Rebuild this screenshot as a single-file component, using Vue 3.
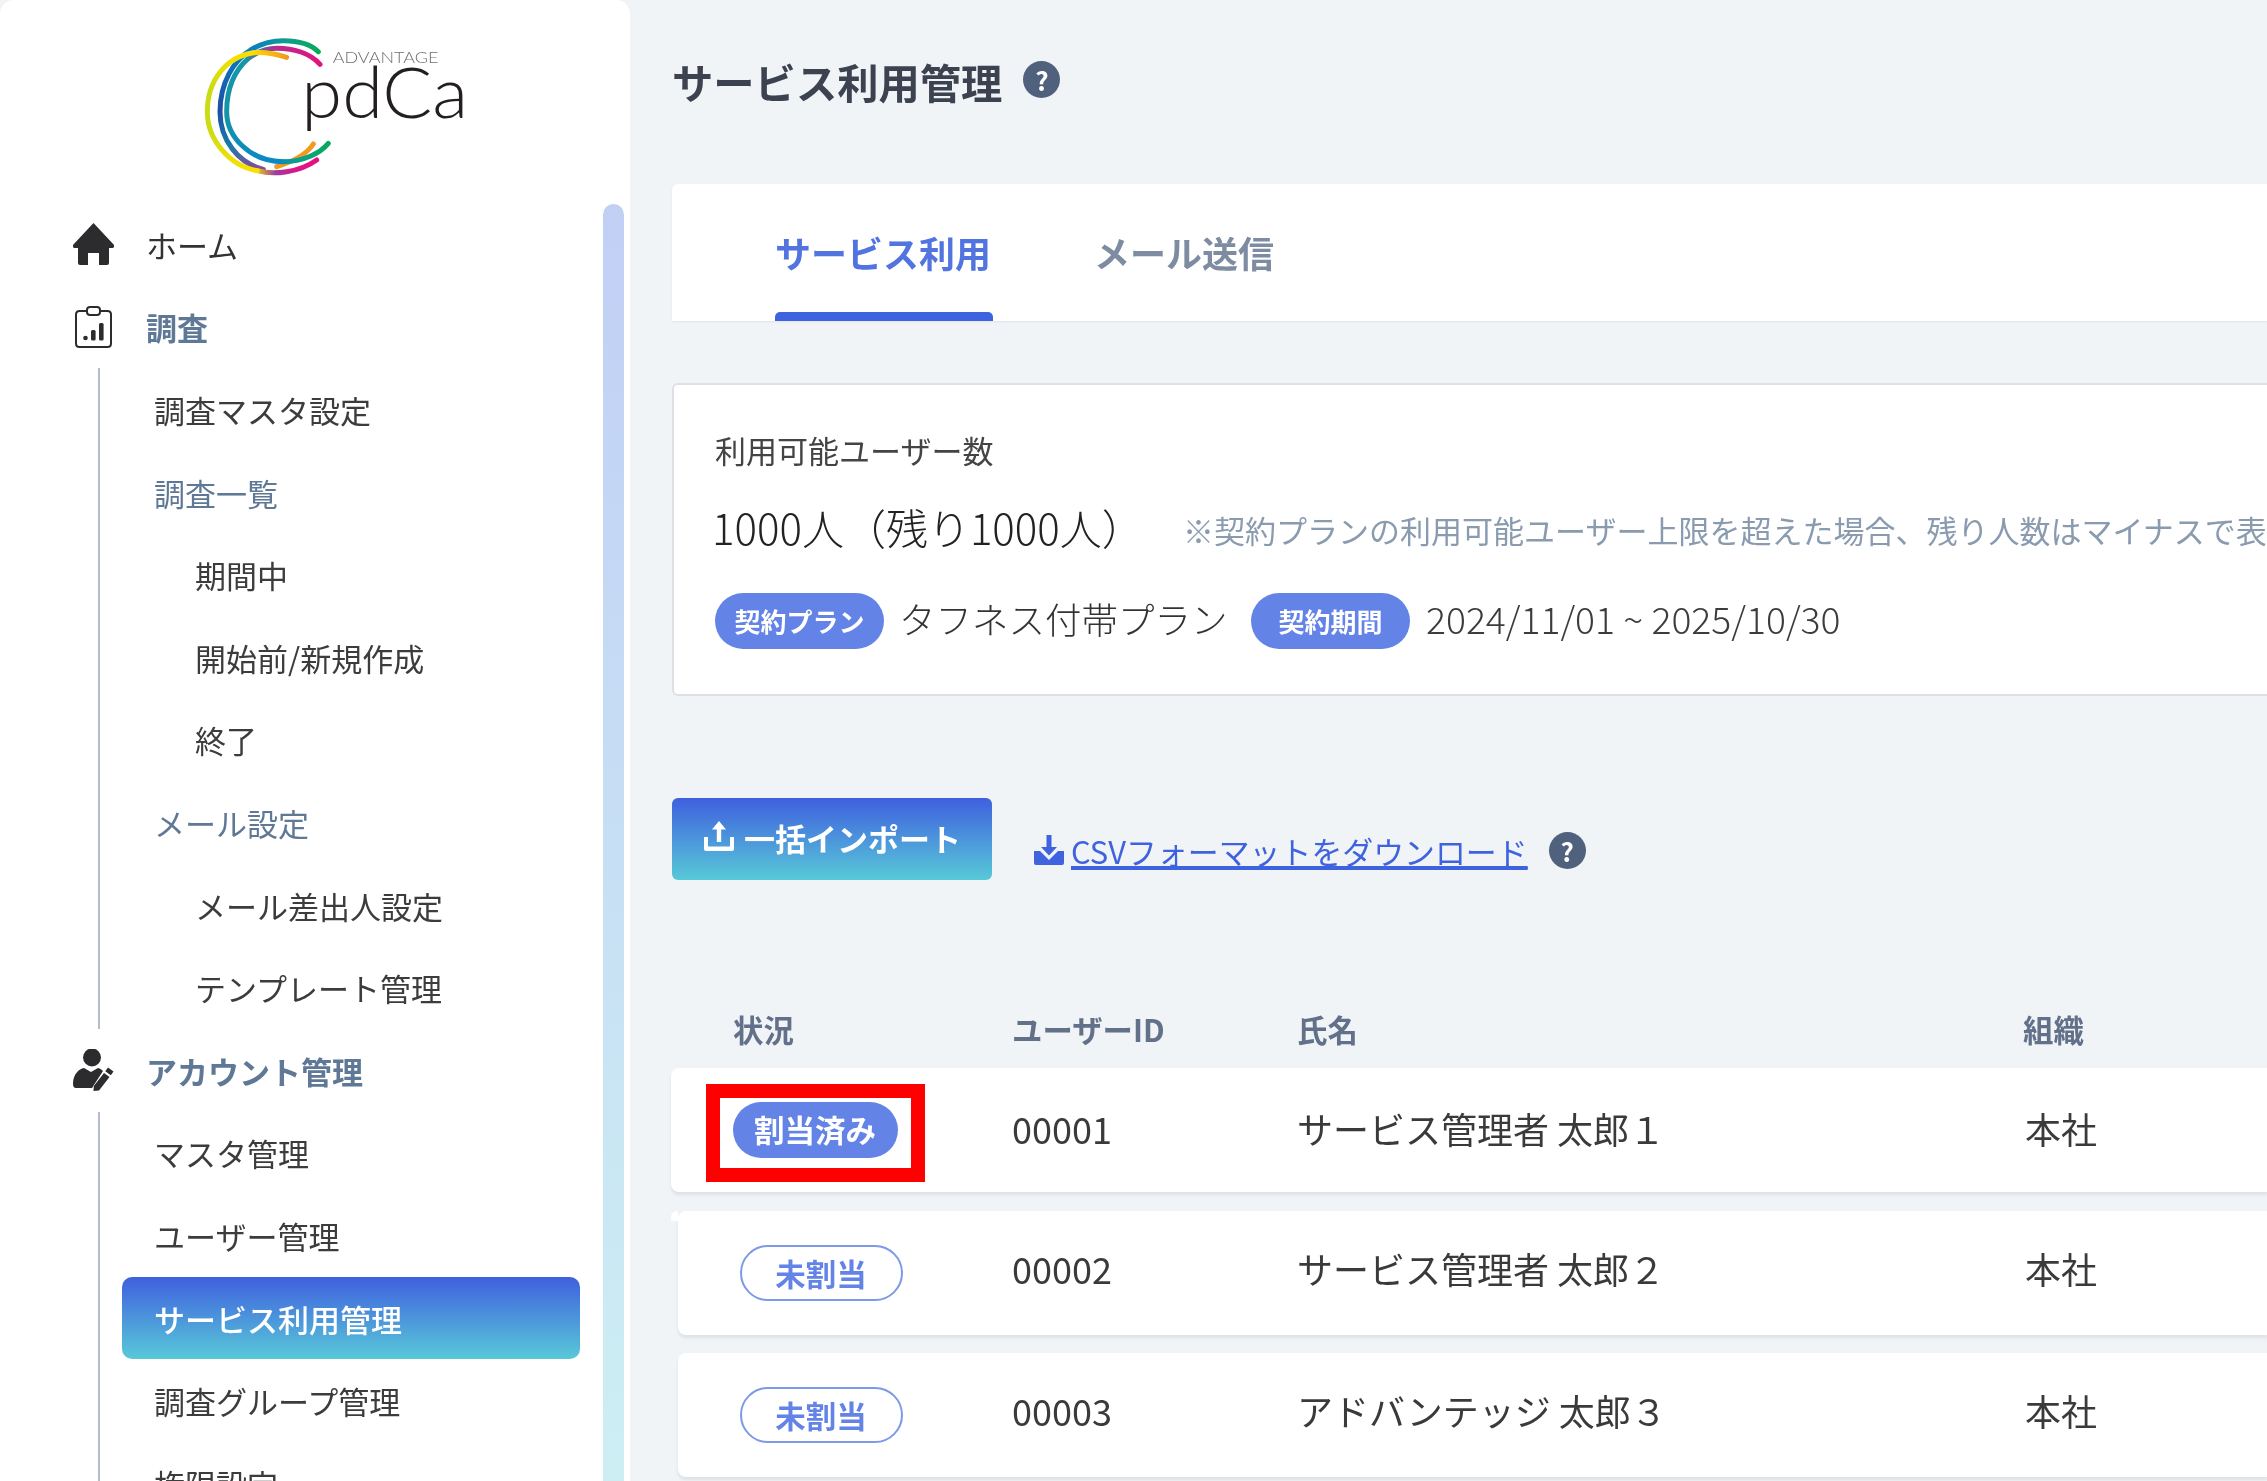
<script setup>
const surveyItems = [
  { label: '調査マスタ設定', depth: 1 },
  { label: '調査一覧', depth: 1, muted: true },
  { label: '期間中', depth: 2 },
  { label: '開始前/新規作成', depth: 2 },
  { label: '終了', depth: 2 },
  { label: 'メール設定', depth: 1, muted: true },
  { label: 'メール差出人設定', depth: 2 },
  { label: 'テンプレート管理', depth: 2 }
]
const accountItems = [
  { label: 'マスタ管理', depth: 1 },
  { label: 'ユーザー管理', depth: 1 },
  { label: 'サービス利用管理', depth: 1, active: true },
  { label: '調査グループ管理', depth: 1 },
  { label: '権限設定', depth: 1 }
]
const users = [
  { id: '00001', name: 'サービス管理者 太郎１', org: '本社', assigned: true },
  { id: '00002', name: 'サービス管理者 太郎２', org: '本社', assigned: false },
  { id: '00003', name: 'アドバンテッジ 太郎３', org: '本社', assigned: false }
]
</script>

<template>
  <div class="page">
    <aside class="sidebar">
      <div class="logo">
        <svg class="logo-svg" viewBox="0 0 960 510" aria-label="ADVANTAGE pdCa">
          <defs>
            <linearGradient id="aTop" gradientUnits="userSpaceOnUse" x1="350" y1="0" x2="240" y2="0">
              <stop offset="0" stop-color="#f39a1e" /><stop offset="1" stop-color="#fbe000" />
            </linearGradient>
            <linearGradient id="aMid" gradientUnits="userSpaceOnUse" x1="0" y1="95" x2="0" y2="455">
              <stop offset="0" stop-color="#fbe000" /><stop offset=".3" stop-color="#cbdc14" />
              <stop offset=".65" stop-color="#cbdc14" /><stop offset="1" stop-color="#fbe000" />
            </linearGradient>
            <linearGradient id="aBot" gradientUnits="userSpaceOnUse" x1="250" y1="0" x2="440" y2="0">
              <stop offset="0" stop-color="#fbe000" /><stop offset=".35" stop-color="#9c3f9c" />
              <stop offset=".6" stop-color="#d21a8e" /><stop offset="1" stop-color="#e4127f" />
            </linearGradient>
            <linearGradient id="bTop" gradientUnits="userSpaceOnUse" x1="445" y1="0" x2="240" y2="0">
              <stop offset="0" stop-color="#07a95c" /><stop offset=".45" stop-color="#0d9f8c" />
              <stop offset="1" stop-color="#0a7cc4" />
            </linearGradient>
            <linearGradient id="bMid" gradientUnits="userSpaceOnUse" x1="0" y1="90" x2="0" y2="450">
              <stop offset="0" stop-color="#0a7cc4" /><stop offset=".5" stop-color="#1c4fa5" />
              <stop offset=".8" stop-color="#1b7aa8" /><stop offset="1" stop-color="#8a4a9a" />
            </linearGradient>
            <linearGradient id="cTop" gradientUnits="userSpaceOnUse" x1="450" y1="0" x2="220" y2="0">
              <stop offset="0" stop-color="#e4127f" /><stop offset=".55" stop-color="#b82a8c" />
              <stop offset="1" stop-color="#1497a8" />
            </linearGradient>
            <linearGradient id="cMid" gradientUnits="userSpaceOnUse" x1="0" y1="100" x2="0" y2="425">
              <stop offset="0" stop-color="#1497a8" /><stop offset=".6" stop-color="#1494a6" />
              <stop offset="1" stop-color="#0a88c8" />
            </linearGradient>
            <linearGradient id="cBot" gradientUnits="userSpaceOnUse" x1="300" y1="0" x2="475" y2="0">
              <stop offset="0" stop-color="#0a88c8" /><stop offset=".5" stop-color="#0c9f8e" />
              <stop offset="1" stop-color="#07a95c" />
            </linearGradient>
          </defs>
          <g fill="none" stroke-width="15" stroke-linecap="round">
            <path stroke="#f39a1e" d="M430 372C415 395 385 420 320 440" />
            <path stroke="url(#bTop)" d="M445 95C420 70 380 62 340 62C310 62 275 70 245 88" />
            <path stroke="url(#bMid)" d="M245 88C190 120 150 190 150 275C150 360 205 430 280 448" />
            <path stroke="url(#cMid)" d="M235 115C195 150 170 205 170 275C170 350 240 425 340 425" />
            <path stroke="url(#cTop)" d="M450 133C420 100 370 85 320 85C290 85 260 97 235 115" />
            <path stroke="url(#cBot)" d="M340 425C400 425 450 400 475 370" />
            <path stroke="url(#aBot)" d="M262 452C290 460 320 460 350 455C385 450 415 438 440 420" />
            <path stroke="url(#aMid)" d="M250 98C170 110 112 180 112 275C112 360 180 438 262 452" />
            <path stroke="url(#aTop)" d="M350 112C320 102 285 95 250 98" />
          </g>
          <text class="logo-adv" x="488" y="129" textLength="317" lengthAdjust="spacingAndGlyphs">ADVANTAGE</text>
          <text class="logo-pdca" x="394" y="294" textLength="500" lengthAdjust="spacingAndGlyphs">pdCa</text>
        </svg>
      </div>

      <nav class="nav">
        <div class="nav-top">
          <svg class="nav-icon" viewBox="0 0 41 42">
            <path fill="#2c2c2e" d="M20.5 0L40.6 21.5C42 23.3 41 25 38.8 25H36V40Q36 42 34 42H26V30H15V42H7Q5 42 5 40V25H2.2C0 25-1 23.3.4 21.5Z" />
          </svg>
          <span class="nav-home">ホーム</span>
        </div>

        <div class="nav-top">
          <svg class="nav-icon" viewBox="0 0 41 42">
            <g fill="none" stroke="#2c2c2e" stroke-width="2">
              <path d="M14 5H6.5Q3 5 3 8.500V37.500Q3 41 6.500 41H34.500Q38 41 38 37.500V8.500Q38 5 34.500 5H27" />
              <rect x="14" y="1" width="13" height="8" rx="3" />
            </g>
            <g fill="#2c2c2e">
              <circle cx="12.500" cy="32" r="2.300" />
              <rect x="18" y="24" width="4.600" height="10.500" rx="1.500" />
              <rect x="26" y="17" width="4.600" height="17.500" rx="1.500" />
            </g>
          </svg>
          <span class="nav-section">調査</span>
        </div>
        <div class="nav-group">
          <div
            v-for="item in surveyItems"
            :key="item.label"
            class="nav-item"
            :class="[`depth-${item.depth}`, { muted: item.muted }]"
          >{{ item.label }}</div>
        </div>

        <div class="nav-top">
          <svg class="nav-icon" viewBox="0 0 41 42">
            <circle cx="19" cy="8.500" r="9" fill="#2c2c2e" />
            <path fill="#2c2c2e" d="M3 39Q0 39 0 35C0 25 6 20 11 19L18 23L25 19C27 19.500 29 21 30 22L19 39Z" />
            <path fill="#2c2c2e" d="M35 18.500L40.500 22.500L37.800 26.200L32.300 22.200ZM31 24L36.500 28L26 41.500L20.500 42L20.800 37Z" />
          </svg>
          <span class="nav-section">アカウント管理</span>
        </div>
        <div class="nav-group">
          <div
            v-for="item in accountItems"
            :key="item.label"
            class="nav-item"
            :class="[`depth-${item.depth}`, { active: item.active }]"
          >{{ item.label }}</div>
        </div>
      </nav>

      <div class="scroll-thumb"></div>
    </aside>

    <main class="main">
      <header class="head">
        <h1 class="title">サービス利用管理</h1>
        <span class="help">?</span>
      </header>

      <div class="tabs">
        <div class="tab tab-on">サービス利用</div>
        <div class="tab">メール送信</div>
      </div>

      <section class="info">
        <div class="info-label">利用可能ユーザー数</div>
        <div class="info-value">
          <span class="count">1000人（残り1000人）</span>
          <span class="note">※契約プランの利用可能ユーザー上限を超えた場合、残り人数はマイナスで表示されます。</span>
        </div>
        <div class="info-plan">
          <span class="pill-info plan">契約プラン</span>
          <span class="plan-name">タフネス付帯プラン</span>
          <span class="pill-info term">契約期間</span>
          <span class="plan-date">2024/11/01 ~ 2025/10/30</span>
        </div>
      </section>

      <div class="actions">
        <button class="import" type="button">
          <svg class="import-icon" viewBox="0 0 30 30">
            <path fill="#fff" d="M15 0L22 8.500H17.200V21H12.800V8.500H8Z" />
            <path fill="#fff" d="M0 16H4V25.500H26V16H30V28Q30 30 28 30H2Q0 30 0 28Z" />
          </svg>
          <span>一括インポート</span>
        </button>
        <a class="csv" href="#">
          <svg class="csv-icon" viewBox="0 0 30 30">
            <path fill="#3f62df" d="M12.500 0H17.500V12H23L15 20.500L7 12H12.500Z" />
            <path fill="#3f62df" d="M0 16H6L15 25L24 16H30V28Q30 30 28 30H2Q0 30 0 28Z" />
          </svg>
          <span class="csv-text">CSVフォーマットをダウンロード</span>
        </a>
        <span class="help help-csv">?</span>
      </div>

      <div class="table">
        <div class="thead">
          <div class="th col-status">状況</div>
          <div class="th col-id">ユーザーID</div>
          <div class="th col-name">氏名</div>
          <div class="th col-org">組織</div>
        </div>
        <div class="tbody">
          <div
            v-for="(user, index) in users"
            :key="user.id"
            class="row"
            :class="{ first: index === 0, inset: index > 0, notched: index === 1 }"
          >
            <div class="col-status cell-status">
              <span v-if="user.assigned" class="state state-on">割当済み</span>
              <span v-else class="state state-off">未割当</span>
            </div>
            <div class="cell col-id">{{ user.id }}</div>
            <div class="cell col-name">{{ user.name }}</div>
            <div class="cell col-org">{{ user.org }}</div>
            <div v-if="index === 0" class="mark"></div>
          </div>
        </div>
      </div>
    </main>
  </div>
</template>

<style>
html, body { margin: 0; background: #f0f4f7; }
</style>

<style scoped>
.page {
  width: 2267px;
  height: 1481px;
  overflow: hidden;
  display: flex;
  background: #f0f4f7;
  color: #333;
  font-family: "Noto Sans CJK JP", "Noto Sans", sans-serif;
  filter: blur(.4px);
}

/* sidebar */
.sidebar {
  position: relative;
  flex: 0 0 630px;
  height: 1481px;
  overflow: hidden;
  background: #fff;
  border-radius: 14px 14px 0 0;
}
.logo { box-sizing: border-box; height: 203px; padding: 20px 0 0 170px; }
.logo-svg { display: block; width: 320px; height: 170px; }
.logo-adv { font-family: Lato, sans-serif; font-weight: 300; font-size: 48px; fill: #6f6f6f; }
.logo-pdca { font-family: Lato, sans-serif; font-weight: 300; font-size: 212px; fill: #231f20; }

.nav-top {
  display: flex;
  align-items: center;
  height: 82.6px;
  padding-left: 73px;
  font-size: 31px;
}
.nav-icon { flex: 0 0 41px; width: 41px; height: 42px; margin-right: 32px; }
.nav-home { color: #333; }
.nav-section { color: #5f7896; font-weight: 700; }

.nav-group {
  margin-left: 98px;
  border-left: 2px solid #b4bccd;
}
.nav-item {
  height: 82.6px;
  display: flex;
  align-items: center;
  font-size: 31px;
  color: #3c3c3c;
}
.depth-1 { padding-left: 54px; }
.depth-2 { padding-left: 95px; }
.muted { color: #5f7896; }
.active {
  box-sizing: border-box;
  margin-left: 22px;
  width: 458px;
  padding-left: 32px;
  border-radius: 10px;
  background: linear-gradient(180deg, #3f60de 0%, #58c9d8 100%);
  color: #fff;
  font-weight: 500;
}

.scroll-thumb {
  position: absolute;
  top: 204px;
  left: 603px;
  width: 21px;
  height: 1300px;
  border-radius: 11px 11px 0 0;
  background: linear-gradient(180deg, #c1cff5 0%, #cdeff3 100%);
}

/* main */
.main { flex: 1; min-width: 0; padding-left: 42px; overflow: hidden; }

.head {
  box-sizing: border-box;
  height: 164px;
  padding-bottom: 2px;
  display: flex;
  align-items: center;
  gap: 21px;
  margin-bottom: 20px;
}
.title { margin: 0; font-size: 41.300px; font-weight: 700; color: #3c4250; }
.help {
  flex: none;
  width: 37px;
  height: 37px;
  border-radius: 50%;
  background: #50617d;
  color: #fff;
  font-size: 26px;
  font-weight: 700;
  line-height: 37px;
  text-align: center;
}
.head .help { margin-top: -4px; }

.tabs {
  box-sizing: border-box;
  height: 137px;
  margin-bottom: 62px;
  padding-left: 103px;
  display: flex;
  gap: 103px;
  background: #fff;
  border-radius: 6px 0 0 0;
  box-shadow: 0 1px 2px rgba(90, 110, 130, .12);
}
.tab {
  height: 137px;
  display: flex;
  align-items: center;
  font-size: 36px;
  font-weight: 700;
  color: #7d8ca0;
  box-sizing: border-box;
  padding-bottom: 2px;
}
.tab-on {
  position: relative;
  color: #5274e0;
}
.tab-on::after {
  content: "";
  position: absolute;
  left: 0;
  right: -2px;
  bottom: 0;
  height: 9px;
  border-radius: 5px 5px 0 0;
  background: #3f62df;
}

.info {
  box-sizing: border-box;
  height: 313px;
  padding: 44.500px 0 0 41px;
  border: 2px solid #dde1e6;
  border-right: 0;
  border-radius: 6px 0 0 6px;
  background: #fff;
}
.info-label { height: 40px; line-height: 40px; font-size: 31px; color: #444; }
.info-value {
  display: flex;
  align-items: center;
  height: 60px;
  margin-top: 27px;
  margin-left: -3px;
  white-space: nowrap;
}
.count { flex: 0 0 471px; font-size: 42px; font-weight: 300; color: #222; }
.note { padding-top: 5px; font-size: 31px; color: #8a9bb0; }
.info-plan {
  display: flex;
  align-items: center;
  height: 56px;
  margin-top: 36px;
  white-space: nowrap;
}
.pill-info {
  box-sizing: border-box;
  height: 56px;
  border-radius: 28px;
  background: #6384e6;
  color: #fff;
  font-size: 26px;
  font-weight: 700;
  display: flex;
  align-items: center;
  justify-content: center;
}
.plan { width: 169px; }
.term { width: 159px; }
.plan-name { width: 367px; padding: 0 0 5px 15px; box-sizing: border-box; font-size: 36.500px; font-weight: 300; color: #333; }
.plan-date { padding: 0 0 5px 16px; font-size: 37.300px; font-weight: 300; color: #3c3c3c; }

.actions {
  display: flex;
  align-items: flex-end;
  margin-top: 102px;
  height: 82px;
}
.import {
  box-sizing: border-box;
  width: 320px;
  height: 82px;
  padding: 0 0 4px 32px;
  display: flex;
  align-items: center;
  gap: 10px;
  border: 0;
  border-radius: 6px;
  background: linear-gradient(180deg, #3f60de 0%, #58c9d8 100%);
  color: #fff;
  font-family: inherit;
  font-size: 31px;
  font-weight: 700;
}
.import-icon { width: 30px; height: 30px; margin-top: -2px; }
.csv {
  display: flex;
  align-items: center;
  gap: 7px;
  margin: 0 21px 14px 42px;
  color: #3f62df;
  font-size: 30.900px;
  height: 32px;
}
.csv-icon { flex: none; width: 30px; height: 30px; }
.csv-text { text-decoration: underline; text-underline-offset: 3px; }
.help-csv { margin-bottom: 11px; }

.table { margin-top: 116px; }
.thead {
  box-sizing: border-box;
  height: 72px;
  padding-bottom: 6px;
  display: flex;
  align-items: center;
}
.th { font-size: 30.400px; font-weight: 700; color: #62708a; }
.th.col-status { width: 340px; padding-left: 61px; box-sizing: border-box; }
.th.col-id { width: 285px; }
.th.col-name { width: 726px; }

.tbody { display: flex; flex-direction: column; gap: 18.500px; margin-left: -1px; }
.row {
  position: relative;
  height: 124px;
  display: flex;
  align-items: center;
  background: #fff;
  border-radius: 8px 0 0 8px;
  box-shadow: 0 3px 3px rgba(90, 110, 130, .13);
}
.inset { margin-left: 7px; }
.notched::before {
  content: "";
  position: absolute;
  left: -7px;
  top: 0;
  width: 7px;
  height: 10px;
  background: #fff;
  border-radius: 6px 0 0 0;
}
.cell-status { width: 341px; padding-left: 61.500px; box-sizing: border-box; flex: none; }
.inset .cell-status { width: 334px; }
.cell { font-size: 36px; color: #3a3a3a; flex: none; padding-bottom: 4px; }
.inset .cell { padding-bottom: 10px; }
.cell.col-id { width: 285px; }
.cell.col-name { width: 728px; }

.state {
  box-sizing: border-box;
  height: 56px;
  border-radius: 28px;
  font-size: 30.500px;
  font-weight: 700;
  display: inline-flex;
  align-items: center;
  justify-content: center;
  vertical-align: middle;
}
.state-on { width: 165px; padding-bottom: 3px; background: #6384e6; color: #fff; }
.state-off { width: 163px; border: 2px solid #7d9ae8; background: #fff; color: #6384e6; }

.mark {
  position: absolute;
  left: 35px;
  top: 16px;
  box-sizing: border-box;
  width: 219px;
  height: 98px;
  border: 14px solid #fe0000;
}
</style>
